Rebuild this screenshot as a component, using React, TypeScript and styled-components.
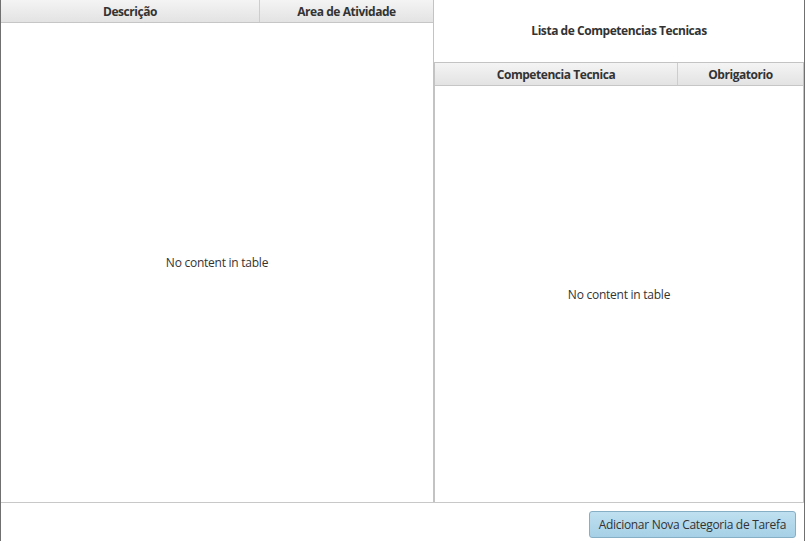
import React from "react";
import styled, { createGlobalStyle } from "styled-components";

const Global = createGlobalStyle`
  html, body { margin: 0; padding: 0; background: #ffffff; }
  body { font-family: "Open Sans", "Noto Sans", sans-serif; }
  * { box-sizing: border-box; }
`;

const Window = styled.div`
  width: 805px;
  height: 541px;
  display: flex;
  flex-direction: column;
  border-left: 1px solid #707070;
  border-right: 1px solid #707070;
  background: #ffffff;
  overflow: hidden;
`;

const Main = styled.div`
  height: 503px;
  display: flex;
  border-bottom: 1px solid #c8c8c8;
`;

const Table = styled.div<{ $width?: number }>`
  display: flex;
  flex-direction: column;
  ${(p) => (p.$width ? `width: ${p.$width}px;` : "flex: 1;")}
  border-right: 1px solid #c3c3c3;
  min-height: 0;
`;

const HeaderRow = styled.div`
  display: flex;
  height: 23px;
  background: linear-gradient(#f4f4f4, #e3e3e3);
  border-bottom: 1px solid #c6c6c6;
  flex-shrink: 0;
`;

const HeaderCell = styled.div<{ $width?: number }>`
  ${(p) => (p.$width ? `width: ${p.$width}px;` : "flex: 1;")}
  display: flex;
  align-items: center;
  justify-content: center;
  font-size: 12px;
  font-weight: 700;
  color: #333333;
  letter-spacing: -0.45px;
  & + & {
    border-left: 1px solid #cdcdcd;
  }
`;

const Body = styled.div`
  flex: 1;
  display: flex;
  align-items: center;
  justify-content: center;
  font-size: 12px;
  color: #333333;
  letter-spacing: -0.25px;
`;

const RightPanel = styled.div`
  flex: 1;
  display: flex;
  flex-direction: column;
`;

const Title = styled.div`
  height: 62px;
  display: flex;
  align-items: center;
  justify-content: center;
  font-size: 12px;
  font-weight: 700;
  color: #333333;
  letter-spacing: -0.45px;
  padding-bottom: 1px;
`;

const RightTable = styled(Table)`
  border-top: 1px solid #c3c3c3;
  border-left: 1px solid #c3c3c3;
`;

const Footer = styled.div`
  flex: 1;
  display: flex;
  justify-content: flex-end;
  align-items: center;
  padding-right: 8px;
  padding-top: 4px;
`;

const Button = styled.button`
  height: 27px;
  padding: 0 9px;
  border: 1px solid #86aec4;
  border-radius: 3px;
  background: linear-gradient(#bfe0f0, #a6d0e6);
  font-family: "Open Sans", "Noto Sans", sans-serif;
  font-size: 12px;
  color: #333333;
  letter-spacing: -0.3px;
  cursor: pointer;
`;

export default function App() {
  return (
    <>
      <Global />
      <Window>
        <Main>
          <Table $width={433}>
            <HeaderRow>
              <HeaderCell $width={258}>Descrição</HeaderCell>
              <HeaderCell>Area de Atividade</HeaderCell>
            </HeaderRow>
            <Body>No content in table</Body>
          </Table>
          <RightPanel>
            <Title>Lista de Competencias Tecnicas</Title>
            <RightTable>
              <HeaderRow>
                <HeaderCell $width={242}>Competencia Tecnica</HeaderCell>
                <HeaderCell>Obrigatorio</HeaderCell>
              </HeaderRow>
              <Body>No content in table</Body>
            </RightTable>
          </RightPanel>
        </Main>
        <Footer>
          <Button>Adicionar Nova Categoria de Tarefa</Button>
        </Footer>
      </Window>
    </>
  );
}
